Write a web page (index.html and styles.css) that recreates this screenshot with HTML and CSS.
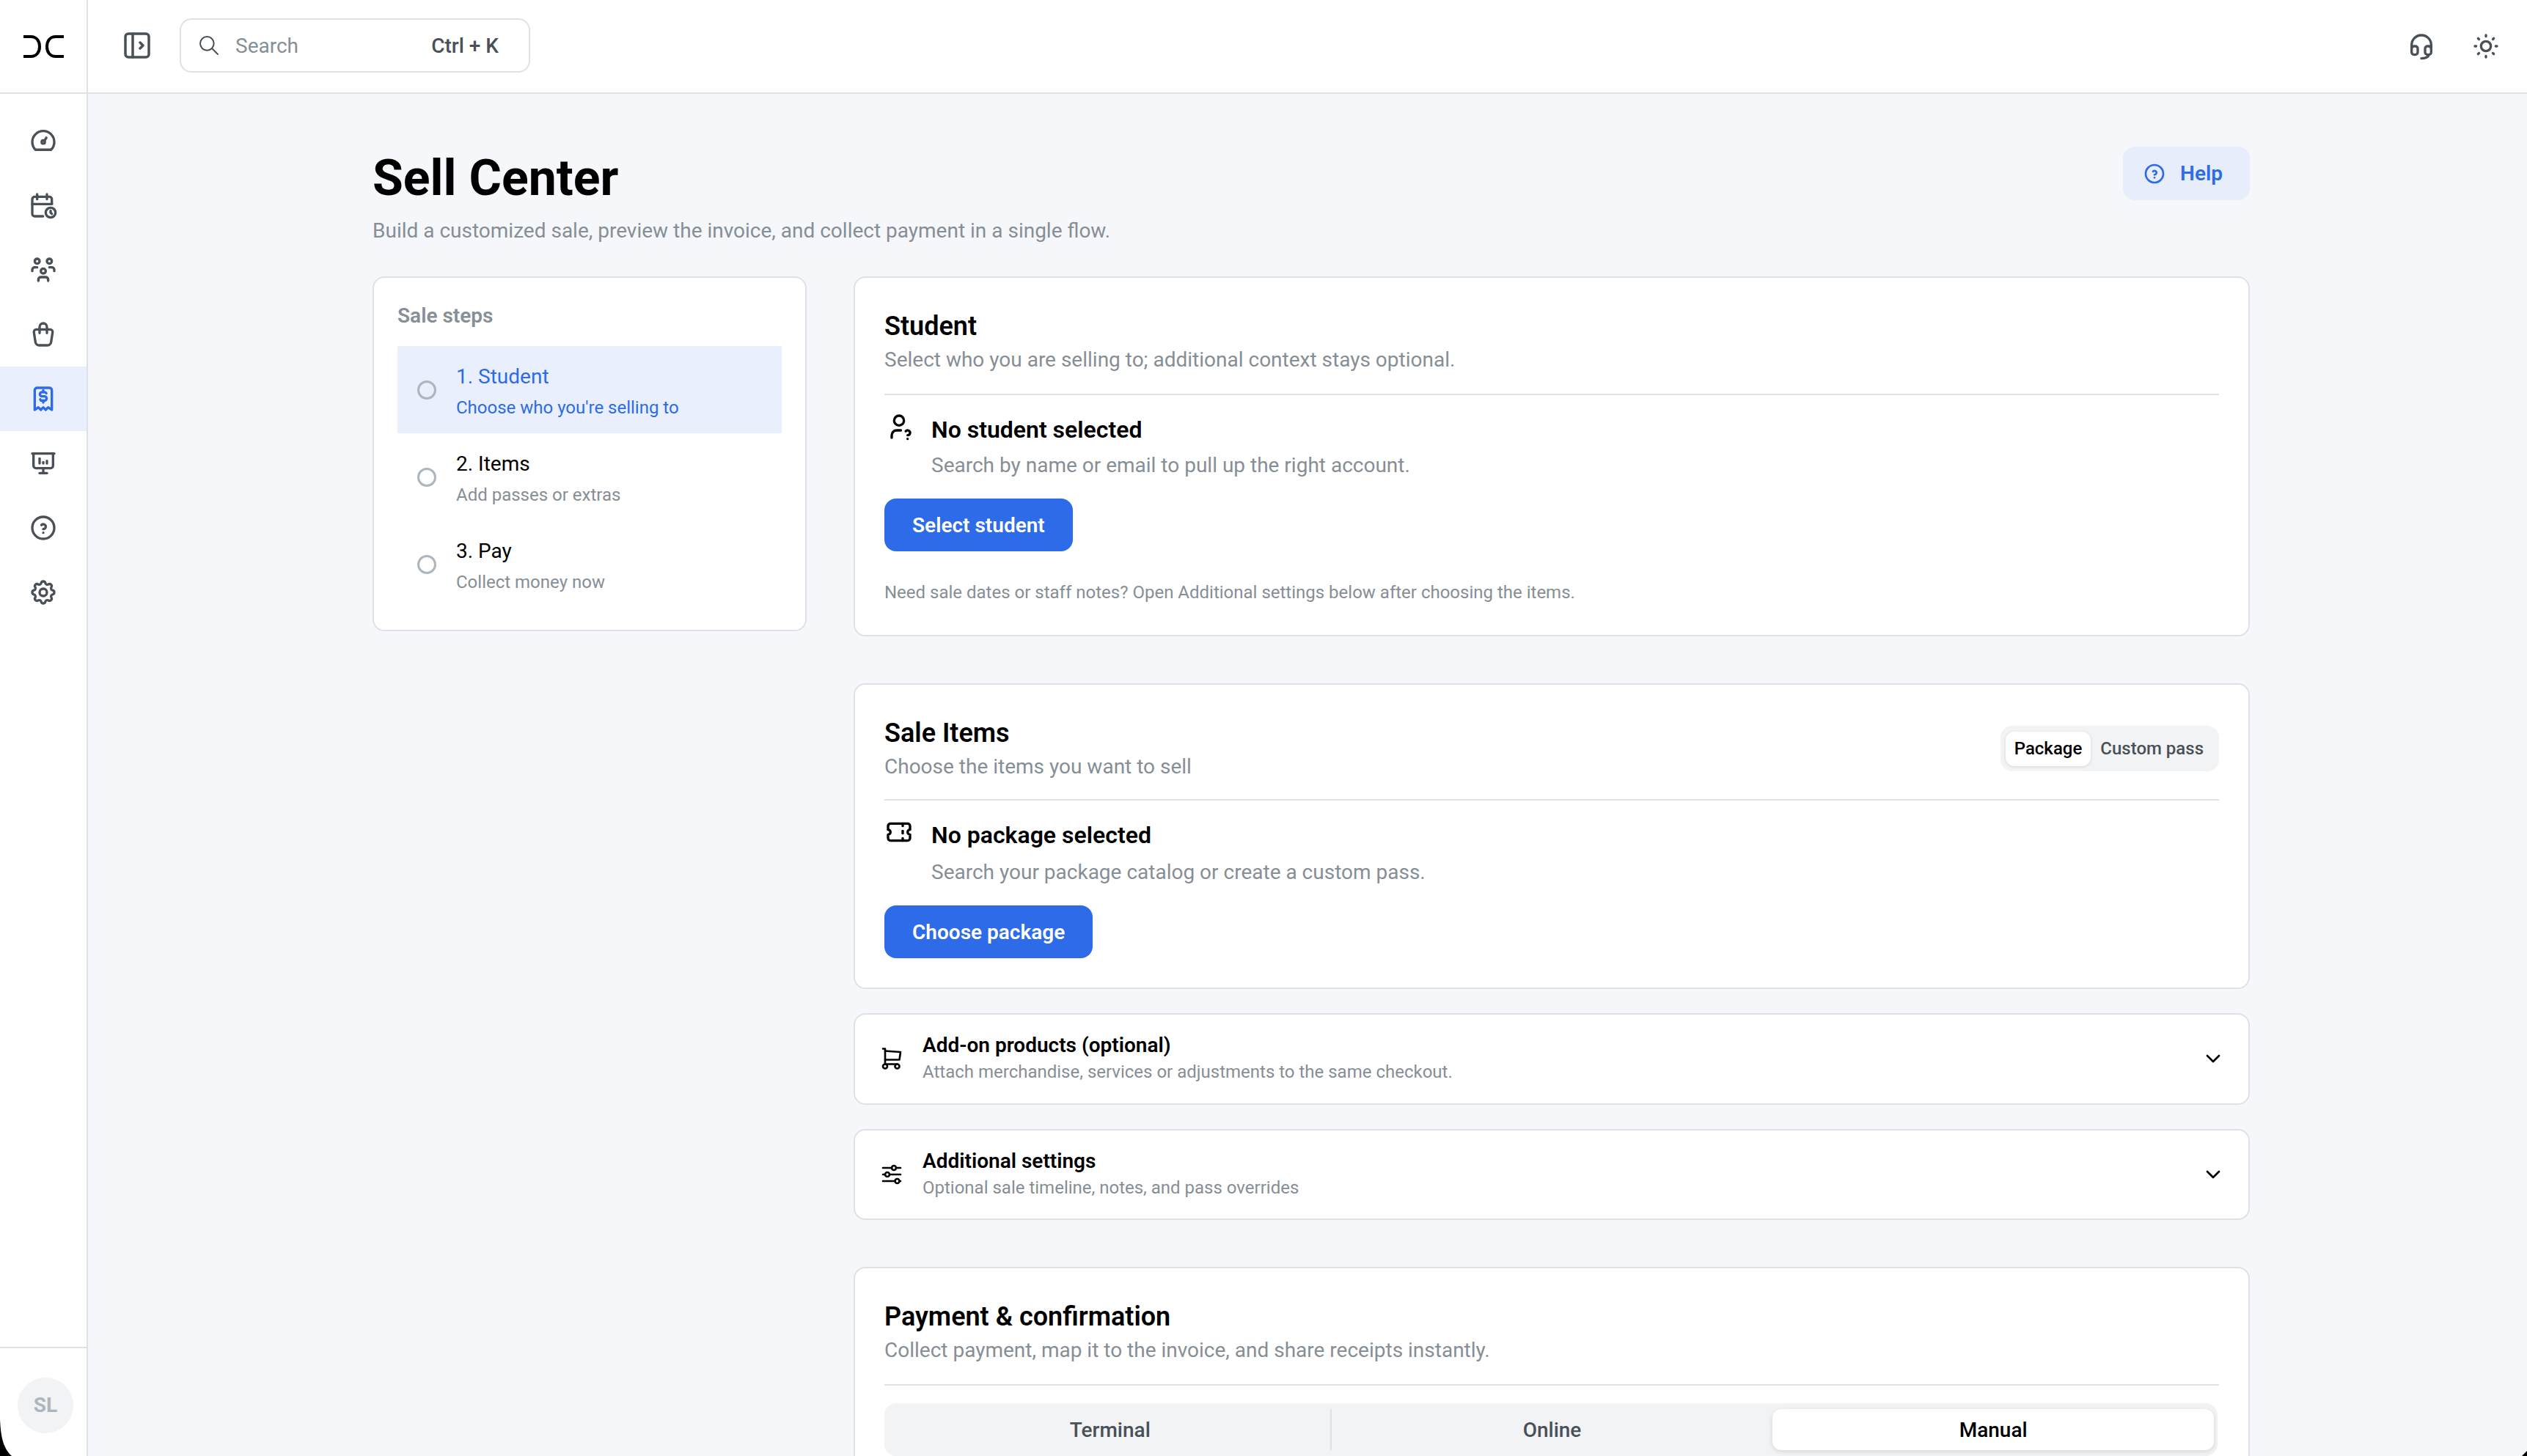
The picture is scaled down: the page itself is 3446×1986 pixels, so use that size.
FILE: index.html
```html
<!DOCTYPE html>
<html lang="en">
<head>
    <meta charset="UTF-8">
    <meta name="viewport" content="width=device-width, initial-scale=1.0">
    <title>Sell Center</title>
    <link rel="stylesheet" href="styles.css">
</head>
<body>
    <header class="topbar">
        <div class="brand">
            <svg class="logo" viewBox="0 0 55 31" fill="none" stroke="currentColor" stroke-width="4">
                <path d="M0 2H10C18 2 22 8 22 15.5C22 23 18 29 10 29H0"/>
                <path d="M55 2H44C36 2 32 8 32 15.5C32 23 36 29 44 29H55"/>
            </svg>
        </div>
        <div class="topbar-left">
            <svg class="icon icon-toggle" viewBox="0 0 24 24"><path d="M4 6a2 2 0 0 1 2 -2h12a2 2 0 0 1 2 2v12a2 2 0 0 1 -2 2h-12a2 2 0 0 1 -2 -2z"/><path d="M9 4v16"/><path d="M14 10l2 2l-2 2"/></svg>
            <div class="search">
                <svg class="icon icon-search" viewBox="0 0 24 24"><circle cx="10" cy="10" r="7"/><path d="M21 21l-6 -6"/></svg>
                <span class="search-label">Search</span>
                <span class="search-key">Ctrl + K</span>
            </div>
        </div>
        <div class="topbar-right">
            <svg class="icon" viewBox="0 0 24 24"><path d="M4 14v-3a8 8 0 1 1 16 0v3"/><path d="M18 19c0 1.657 -2.686 3 -6 3"/><path d="M4 14a2 2 0 0 1 2 -2h1a2 2 0 0 1 2 2v3a2 2 0 0 1 -2 2h-1a2 2 0 0 1 -2 -2v-3z"/><path d="M15 14a2 2 0 0 1 2 -2h1a2 2 0 0 1 2 2v3a2 2 0 0 1 -2 2h-1a2 2 0 0 1 -2 -2v-3z"/></svg>
            <svg class="icon" viewBox="0 0 24 24"><circle cx="12" cy="12" r="4"/><path d="M3 12h1m8 -9v1m8 8h1m-9 8v1m-6.4 -15.4l.7 .7m12.1 -.7l-.7 .7m0 11.4l.7 .7m-12.1 -.7l-.7 .7"/></svg>
        </div>
    </header>

    <div class="shell">
        <aside class="sidebar">
            <nav class="nav">
                <a class="nav-item"><svg class="icon" viewBox="0 0 24 24"><path d="M5.636 19.364a9 9 0 1 1 12.728 0z"/><circle cx="12" cy="13" r="1.3"/><path d="M14.5 9.5l-1.5 2.5"/></svg></a>
                <a class="nav-item"><svg class="icon" viewBox="0 0 24 24"><path d="M11.795 21h-6.795a2 2 0 0 1 -2 -2v-12a2 2 0 0 1 2 -2h12a2 2 0 0 1 2 2v4"/><circle cx="18" cy="18" r="4"/><path d="M15 3v4"/><path d="M7 3v4"/><path d="M3 11h16"/><path d="M18 16.496v1.504l1 1"/></svg></a>
                <a class="nav-item"><svg class="icon" viewBox="0 0 24 24"><path d="M10 13a2 2 0 1 0 4 0a2 2 0 0 0 -4 0"/><path d="M8 21v-1a2 2 0 0 1 2 -2h4a2 2 0 0 1 2 2v1"/><path d="M15 5a2 2 0 1 0 4 0a2 2 0 0 0 -4 0"/><path d="M17 10h2a2 2 0 0 1 2 2v1"/><path d="M5 5a2 2 0 1 0 4 0a2 2 0 0 0 -4 0"/><path d="M3 13v-1a2 2 0 0 1 2 -2h2"/></svg></a>
                <a class="nav-item"><svg class="icon" viewBox="0 0 24 24"><path d="M6.331 8h11.339a2 2 0 0 1 1.977 2.304l-1.255 8.152a3 3 0 0 1 -2.966 2.544h-6.852a3 3 0 0 1 -2.965 -2.544l-1.255 -8.152a2 2 0 0 1 1.977 -2.304z"/><path d="M9 11v-5a3 3 0 0 1 6 0v5"/></svg></a>
                <a class="nav-item active"><svg class="icon" viewBox="0 0 24 24"><path d="M5 21v-16a2 2 0 0 1 2 -2h10a2 2 0 0 1 2 2v16l-3 -2l-2 2l-2 -2l-2 2l-2 -2l-3 2"/><path d="M14.5 7.5a1.5 1.5 0 0 0 -1.5 -1h-2a1.5 1.5 0 0 0 0 3.5h2a1.5 1.5 0 0 1 0 3.5h-2a1.5 1.5 0 0 1 -1.5 -1"/><path d="M12 5v1.5m0 7v1.5"/></svg></a>
                <a class="nav-item"><svg class="icon" viewBox="0 0 24 24"><path d="M9 12v-4"/><path d="M15 12v-2"/><path d="M12 12v-1"/><path d="M3 4h18"/><path d="M4 4v10a2 2 0 0 0 2 2h12a2 2 0 0 0 2 -2v-10"/><path d="M12 16v4"/><path d="M9 20h6"/></svg></a>
                <a class="nav-item"><svg class="icon" viewBox="0 0 24 24"><circle cx="12" cy="12" r="9"/><path d="M12 16v.01"/><path d="M12 13a2 2 0 0 0 .914 -3.782a1.98 1.98 0 0 0 -2.414 .483"/></svg></a>
                <a class="nav-item"><svg class="icon" viewBox="0 0 24 24"><path d="M10.325 4.317c.426 -1.756 2.924 -1.756 3.35 0a1.724 1.724 0 0 0 2.573 1.066c1.543 -.94 3.31 .826 2.37 2.37a1.724 1.724 0 0 0 1.065 2.572c1.756 .426 1.756 2.924 0 3.35a1.724 1.724 0 0 0 -1.066 2.573c.94 1.543 -.826 3.31 -2.37 2.37a1.724 1.724 0 0 0 -2.572 1.065c-.426 1.756 -2.924 1.756 -3.35 0a1.724 1.724 0 0 0 -2.573 -1.066c-1.543 .94 -3.31 -.826 -2.37 -2.37a1.724 1.724 0 0 0 -1.065 -2.572c-1.756 -.426 -1.756 -2.924 0 -3.35a1.724 1.724 0 0 0 1.066 -2.573c-.94 -1.543 .826 -3.31 2.37 -2.37c1 .608 2.296 .07 2.572 -1.065z"/><circle cx="12" cy="12" r="3"/></svg></a>
            </nav>
            <div class="sidebar-foot">
                <div class="avatar">SL</div>
            </div>
        </aside>

        <main class="main">
            <div class="page-head">
                <div>
                    <h1>Sell Center</h1>
                    <p class="page-sub">Build a customized sale, preview the invoice, and collect payment in a single flow.</p>
                </div>
                <button class="help-btn">
                    <svg class="icon" viewBox="0 0 24 24"><circle cx="12" cy="12" r="9"/><path d="M12 16v.01"/><path d="M12 13a2 2 0 0 0 .914 -3.782a1.98 1.98 0 0 0 -2.414 .483"/></svg>
                    Help
                </button>
            </div>

            <div class="layout">
                <section class="card steps">
                    <div class="steps-title">Sale steps</div>
                    <div class="step current">
                        <span class="step-dot"></span>
                        <div class="step-text">
                            <div class="step-name">1. Student</div>
                            <div class="step-desc">Choose who you're selling to</div>
                        </div>
                    </div>
                    <div class="step">
                        <span class="step-dot"></span>
                        <div class="step-text">
                            <div class="step-name">2. Items</div>
                            <div class="step-desc">Add passes or extras</div>
                        </div>
                    </div>
                    <div class="step">
                        <span class="step-dot"></span>
                        <div class="step-text">
                            <div class="step-name">3. Pay</div>
                            <div class="step-desc">Collect money now</div>
                        </div>
                    </div>
                </section>

                <div class="flow">
                    <section class="card panel">
                        <div class="panel-head">
                            <div>
                                <h2>Student</h2>
                                <p class="muted">Select who you are selling to; additional context stays optional.</p>
                            </div>
                        </div>
                        <div class="empty">
                            <svg class="icon" viewBox="0 0 24 24"><path d="M8 7a4 4 0 1 0 8 0a4 4 0 0 0 -8 0"/><path d="M6 21v-2a4 4 0 0 1 4 -4h3.5"/><path d="M19 22v.01"/><path d="M19 19a2.003 2.003 0 0 0 .914 -3.782a1.98 1.98 0 0 0 -2.414 .483"/></svg>
                            <div>
                                <h3>No student selected</h3>
                                <p class="muted">Search by name or email to pull up the right account.</p>
                            </div>
                        </div>
                        <button class="primary-btn">Select student</button>
                        <p class="note">Need sale dates or staff notes? Open Additional settings below after choosing the items.</p>
                    </section>

                    <div class="stack">
                        <section class="card panel">
                            <div class="panel-head">
                                <div>
                                    <h2>Sale Items</h2>
                                    <p class="muted">Choose the items you want to sell</p>
                                </div>
                                <div class="switch">
                                    <span class="switch-item on">Package</span>
                                    <span class="switch-item">Custom pass</span>
                                </div>
                            </div>
                            <div class="empty">
                                <svg class="icon" viewBox="0 0 24 24"><path d="M15 5v2"/><path d="M15 11v2"/><path d="M15 17v2"/><path d="M5 5h14a2 2 0 0 1 2 2v3a2 2 0 0 0 0 4v3a2 2 0 0 1 -2 2h-14a2 2 0 0 1 -2 -2v-3a2 2 0 0 0 0 -4v-3a2 2 0 0 1 2 -2"/></svg>
                                <div>
                                    <h3>No package selected</h3>
                                    <p class="muted">Search your package catalog or create a custom pass.</p>
                                </div>
                            </div>
                            <button class="primary-btn">Choose package</button>
                        </section>

                        <section class="card fold">
                            <svg class="icon" viewBox="0 0 24 24"><circle cx="6" cy="19" r="2"/><circle cx="17" cy="19" r="2"/><path d="M17 17h-11v-14h-2"/><path d="M6 5l14 1l-1 7h-13"/></svg>
                            <div class="fold-text">
                                <div class="fold-title">Add-on products (optional)</div>
                                <div class="fold-desc">Attach merchandise, services or adjustments to the same checkout.</div>
                            </div>
                            <svg class="icon chevron" viewBox="0 0 24 24"><path d="M6 9l6 6l6 -6"/></svg>
                        </section>

                        <section class="card fold">
                            <svg class="icon" viewBox="0 0 24 24"><circle cx="14" cy="6" r="2"/><path d="M4 6h8"/><path d="M16 6h4"/><circle cx="8" cy="12" r="2"/><path d="M4 12h2"/><path d="M10 12h10"/><circle cx="17" cy="18" r="2"/><path d="M4 18h11"/><path d="M19 18h1"/></svg>
                            <div class="fold-text">
                                <div class="fold-title">Additional settings</div>
                                <div class="fold-desc">Optional sale timeline, notes, and pass overrides</div>
                            </div>
                            <svg class="icon chevron" viewBox="0 0 24 24"><path d="M6 9l6 6l6 -6"/></svg>
                        </section>
                    </div>

                    <section class="card panel">
                        <div class="panel-head">
                            <div>
                                <h2>Payment &amp; confirmation</h2>
                                <p class="muted">Collect payment, map it to the invoice, and share receipts instantly.</p>
                            </div>
                        </div>
                        <div class="tabs">
                            <span class="tab">Terminal</span>
                            <span class="tab">Online</span>
                            <span class="tab on">Manual</span>
                        </div>
                    </section>
                </div>
            </div>
        </main>
    </div>
    <svg class="screen-corner left" viewBox="0 0 16 50"><path d="M0 0C1 20 3 38 16 50H0z"/></svg>
    <svg class="screen-corner right" viewBox="0 0 7 7"><path d="M7 0V7H0z"/></svg>
</body>
</html>
```

FILE: styles.css
```css
* {
    box-sizing: border-box;
}

html, body {
    height: 100%;
}

body {
    margin: 0;
    overflow: hidden;
    position: relative;
    font-family: 'Roboto', 'Liberation Sans', sans-serif;
    font-size: 28px;
    color: #000;
    background-color: #f5f7fb;
}

h1, h2, h3, p {
    margin: 0;
}

.icon {
    display: block;
    flex: none;
    width: 40px;
    height: 40px;
    fill: none;
    stroke: currentColor;
    stroke-width: 2;
    stroke-linecap: round;
    stroke-linejoin: round;
}

/* top bar */
.topbar {
    display: flex;
    align-items: center;
    height: 128px;
    background-color: white;
    border-bottom: 2px solid #dee2e6;
}

.brand {
    display: flex;
    align-items: center;
    justify-content: center;
    width: 120px;
    height: 100%;
    border-right: 2px solid #dee2e6;
}

.logo {
    width: 55px;
    height: 31px;
    color: #000;
}

.topbar-left {
    display: flex;
    align-items: center;
    gap: 34px;
    padding-left: 43px;
    padding-bottom: 2px;
}

.icon-toggle {
    width: 48px;
    height: 48px;
    stroke-width: 1.75;
    color: #495057;
}

.search {
    display: flex;
    align-items: center;
    width: 478px;
    height: 74px;
    padding: 0 41px 0 22px;
    border: 2px solid #dee2e6;
    border-radius: 16px;
}

.icon-search {
    width: 32px;
    height: 32px;
    stroke-width: 1.5;
    color: #495057;
}

.search-label {
    margin-left: 20px;
    color: #868e96;
}

.search-key {
    margin-left: auto;
    font-weight: 500;
    color: #495057;
}

.topbar-right {
    display: flex;
    align-items: center;
    gap: 48px;
    margin-left: auto;
    padding-right: 36px;
    color: #495057;
}

/* sidebar */
.shell {
    display: flex;
    height: calc(100% - 128px);
}

.sidebar {
    display: flex;
    flex-direction: column;
    flex: none;
    width: 120px;
    background-color: white;
    border-right: 2px solid #dee2e6;
}

.nav {
    flex: 1;
    padding-top: 20px;
}

.nav-item {
    display: flex;
    align-items: center;
    justify-content: center;
    height: 88px;
    color: #495057;
}

.nav-item.active {
    color: #2d6be8;
    background-color: #e9effc;
}

.sidebar-foot {
    display: flex;
    align-items: center;
    justify-content: center;
    height: 149px;
    padding: 8px 0 0 6px;
    border-top: 2px solid #dee2e6;
}

.avatar {
    display: flex;
    align-items: center;
    justify-content: center;
    width: 76px;
    height: 76px;
    border-radius: 50%;
    font-size: 28px;
    font-weight: 700;
    color: #adb5bd;
    background-color: #f1f3f5;
}

.screen-corner {
    position: absolute;
    bottom: 0;
    fill: #000;
}

.screen-corner.left {
    left: 0;
    width: 16px;
    height: 50px;
}

.screen-corner.right {
    right: 0;
    width: 7px;
    height: 7px;
}

/* main column */
.main {
    flex: 1;
    min-width: 0;
    padding: 72px 0 0 388px;
}

.page-head,
.layout {
    width: 2560px;
}

.page-head {
    display: flex;
    align-items: flex-start;
    justify-content: space-between;
    height: 177px;
}

h1 {
    font-size: 68px;
    font-weight: 700;
    line-height: 86px;
}

.page-sub {
    margin-top: 9px;
    line-height: 40px;
    color: #868e96;
}

.help-btn {
    display: flex;
    align-items: center;
    gap: 19px;
    height: 73px;
    padding: 0 37px 0 27px;
    border: none;
    border-radius: 16px;
    font: inherit;
    font-weight: 600;
    color: #2d6be8;
    background-color: #e7edfa;
}

.help-btn .icon {
    width: 32px;
    height: 32px;
}

.layout {
    display: grid;
    grid-template-columns: 592px 1904px;
    gap: 64px;
    align-items: start;
}

.card {
    background-color: white;
    border: 2px solid #dee2e6;
    border-radius: 16px;
}

/* steps card */
.steps {
    padding: 32px 32px 30px;
}

.steps-title {
    height: 61px;
    line-height: 40px;
    font-weight: 600;
    color: #868e96;
}

.step {
    display: flex;
    align-items: center;
    gap: 27px;
    height: 119px;
    padding-left: 27px;
}

.step-dot {
    flex: none;
    width: 26px;
    height: 26px;
    border: 3px solid #adb5bd;
    border-radius: 50%;
}

.step-text {
    padding-top: 4px;
}

.step-name {
    line-height: 40px;
}

.step-desc {
    margin-top: 4px;
    font-size: 24px;
    line-height: 36px;
    color: #868e96;
}

.step.current {
    background-color: #e9effc;
}

.step.current .step-name,
.step.current .step-desc {
    color: #2d6be8;
}

/* right column */
.flow {
    display: flex;
    flex-direction: column;
    gap: 64px;
}

.stack {
    display: flex;
    flex-direction: column;
    gap: 33px;
}

.panel {
    padding: 42px 40px 40px;
}

.panel-head {
    display: flex;
    align-items: center;
    justify-content: space-between;
    padding-bottom: 24px;
    border-bottom: 2px solid #dee2e6;
}

.stack .panel-head {
    padding-bottom: 22px;
}

h2 {
    font-size: 36px;
    font-weight: 600;
    line-height: 48px;
}

.muted {
    line-height: 44px;
    color: #868e96;
}

.empty {
    display: flex;
    gap: 24px;
    padding-top: 23px;
}

.empty .muted {
    margin-top: 3px;
}

.stack .empty .muted {
    margin-top: 5px;
}

h3 {
    font-size: 32px;
    font-weight: 600;
    line-height: 48px;
}

.primary-btn {
    display: block;
    height: 72px;
    margin-top: 23px;
    padding: 0 38px;
    border: none;
    border-radius: 16px;
    font: inherit;
    font-weight: 600;
    color: white;
    background-color: #2d6be8;
}

.note {
    margin-top: 38px;
    font-size: 24px;
    line-height: 36px;
    color: #868e96;
}

.switch {
    display: flex;
    margin-bottom: 2px;
    padding: 8px 8px 7px 7px;
    border-radius: 16px;
    font-size: 24px;
    font-weight: 500;
    color: #495057;
    background-color: #f1f3f5;
}

.switch-item {
    padding: 0 13px;
    line-height: 47px;
    border-radius: 12px;
}

.switch-item.on {
    padding: 0 12px;
    color: #000;
    background-color: white;
    box-shadow: 0 1px 4px rgba(0, 0, 0, 0.12);
}

/* collapsed rows */
.fold {
    display: flex;
    align-items: center;
    gap: 24px;
    height: 124.5px;
    padding: 0 32px;
}

.fold .icon {
    width: 36px;
    height: 36px;
    stroke-width: 1.75;
}

.fold-text {
    flex: 1;
}

.fold-title {
    font-weight: 600;
    line-height: 36px;
}

.fold-desc {
    font-size: 24px;
    line-height: 36px;
    color: #868e96;
}

.fold .chevron {
    width: 32px;
    height: 32px;
    stroke-width: 2;
}

/* payment tabs */
.tabs {
    display: grid;
    grid-template-columns: repeat(3, 1fr);
    height: 72px;
    margin: 24px 2px 0 0;
    padding: 8px 5px 8px 8px;
    border-radius: 16px;
    font-weight: 500;
    color: #495057;
    background-color: #f1f3f5;
}

.tab {
    display: flex;
    align-items: center;
    justify-content: center;
    border-radius: 12px;
}

.tab:first-child {
    border-right: 2px solid #dee2e6;
    border-radius: 0;
}

.tab.on {
    color: #000;
    background-color: white;
    box-shadow: 0 2px 6px rgba(0, 0, 0, 0.12);
}
```
